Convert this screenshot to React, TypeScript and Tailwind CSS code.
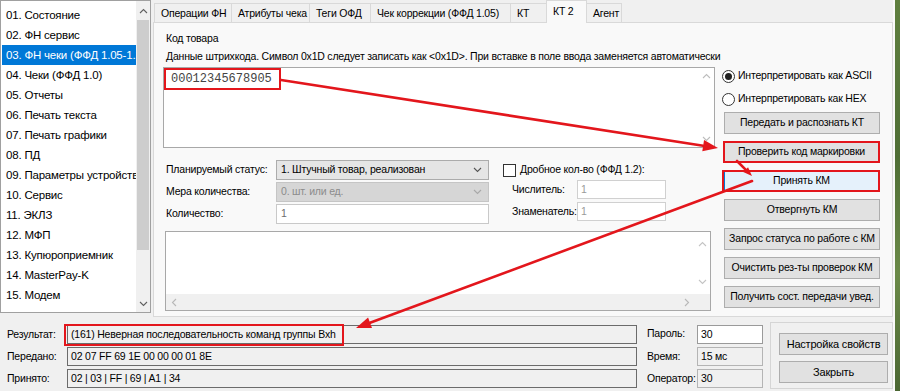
import React from 'react';

const RED = '#e3161c';

const menuItems = [
  '01. Состояние',
  '02. ФН сервис',
  '03. ФН чеки (ФФД 1.05-1.2)',
  '04. Чеки (ФФД 1.0)',
  '05. Отчеты',
  '06. Печать текста',
  '07. Печать графики',
  '08. ПД',
  '09. Параметры устройства',
  '10. Сервис',
  '11. ЭКЛЗ',
  '12. МФП',
  '13. Купюроприемник',
  '14. MasterPay-K',
  '15. Модем',
];

const tabs = [
  { title: 'Операции ФН', w: 'w-[78px]' },
  { title: 'Атрибуты чека', w: 'w-[79px]' },
  { title: 'Теги ОФД', w: 'w-[62px]' },
  { title: 'Чек коррекции (ФФД 1.05)', w: 'w-[141px]' },
  { title: 'КТ', w: 'w-[37px]' },
  { title: 'КТ 2', w: 'w-[41px]', active: true },
  { title: 'Агент', w: 'w-[36px]' },
];

const sideButtons = [
  'Отвергнуть КМ',
  'Запрос статуса по работе с КМ',
  'Очистить рез-ты проверок КМ',
  'Получить сост. передачи увед.',
];

type Dir = 'up' | 'down' | 'left' | 'right';

const Chevron: React.FC<{ dir: Dir; className?: string }> = ({ dir, className }) => {
  const vertical = dir === 'up' || dir === 'down';
  const w = vertical ? 9 : 6;
  const h = vertical ? 6 : 9;
  const pts = {
    up: '1,5 4.5,1.5 8,5',
    down: '1,1 4.5,4.5 8,1',
    left: '5,1 1.5,4.5 5,8',
    right: '1,1 4.5,4.5 1,8',
  }[dir];
  return (
    <svg width={w} height={h} viewBox={`0 0 ${w} ${h}`} className={className}>
      <polyline points={pts} fill="none" stroke="currentColor" strokeWidth="1.1" />
    </svg>
  );
};

const Arrow: React.FC<{ x1: number; y1: number; x2: number; y2: number; head?: number }> = ({
  x1, y1, x2, y2, head = 15,
}) => {
  const a = Math.atan2(y2 - y1, x2 - x1);
  const half = head * 0.38;
  const bx = x2 - head * Math.cos(a);
  const by = y2 - head * Math.sin(a);
  const p1 = `${bx + half * Math.sin(a)},${by - half * Math.cos(a)}`;
  const p2 = `${bx - half * Math.sin(a)},${by + half * Math.cos(a)}`;
  return (
    <g>
      <line x1={x1} y1={y1} x2={bx} y2={by} stroke={RED} strokeWidth="2.6" strokeLinecap="round" />
      <polygon points={`${x2},${y2} ${p1} ${p2}`} fill={RED} />
    </g>
  );
};

const Radio: React.FC<{ checked?: boolean; label: string }> = ({ checked, label }) => (
  <div className="h-[18px] flex items-center pl-[2px] whitespace-nowrap">
    <span className="w-[13px] h-[13px] shrink-0 rounded-full border border-[#333] bg-white flex items-center justify-center">
      {checked && <span className="w-[7px] h-[7px] rounded-full bg-[#222]" />}
    </span>
    <span className="ml-[3px]">{label}</span>
  </div>
);

const WinButton: React.FC<{ children: React.ReactNode; className?: string }> = ({ children, className = '' }) => (
  <div
    className={`h-[22px] bg-[#e1e1e1] border border-[#adadad] flex items-center justify-center whitespace-nowrap ${className}`}
  >
    {children}
  </div>
);

const ListBox = () => (
  <div className="w-[151px] h-[313px] bg-white border border-[#a0a0a0] flex text-[11.5px]">
    <div className="flex-1 pt-[4px] pl-[1px] overflow-hidden">
      {menuItems.map((m, i) => (
        <div
          key={m}
          className={`h-[20px] leading-[20px] pl-[4px] whitespace-nowrap overflow-hidden ${
            i === 2 ? 'bg-[#0078d7] text-white' : ''
          }`}
        >
          {m}
        </div>
      ))}
    </div>
    <div className="w-[14px] bg-[#f0f0f0] flex flex-col items-center">
      <div className="h-[19px] flex items-center text-[#606060]">
        <Chevron dir="up" />
      </div>
      <div className="w-[12px] h-[230px] bg-[#cdcdcd]" />
      <div className="flex-1" />
      <div className="h-[17px] flex items-center text-[#606060]">
        <Chevron dir="down" />
      </div>
    </div>
  </div>
);

const TabStrip = () => (
  <div className="h-[22px] flex items-end pl-[2px]">
    {tabs.map((t) =>
      t.active ? (
        <div
          key={t.title}
          className={`${t.w} h-[23px] -ml-px relative z-10 bg-[#f9f9f9] border border-b-0 border-[#d9d9d9] pl-[6px] pt-[3px] leading-[14px] whitespace-nowrap -mb-px`}
        >
          {t.title}
        </div>
      ) : (
        <div
          key={t.title}
          className={`${t.w} h-[19px] -ml-px bg-[#f0f0f0] border border-b-0 border-[#d9d9d9] pl-[6px] leading-[18px] whitespace-nowrap`}
        >
          {t.title}
        </div>
      )
    )}
  </div>
);

const FormArea = () => (
  <div className="flex mt-[12px] whitespace-nowrap">
    <div className="w-[326px] flex flex-col gap-[2px]">
      <div className="h-[20px] flex items-center">
        <div className="w-[113px] pl-[3px]">Планируемый статус:</div>
        <div className="w-[213px] h-[20px] bg-[#e5e5e5] border border-[#acacac] flex items-center pl-[4px] pr-[6px]">
          <span className="flex-1">1. Штучный товар, реализован</span>
          <Chevron dir="down" className="text-[#555]" />
        </div>
      </div>
      <div className="h-[20px] flex items-center">
        <div className="w-[113px] pl-[3px]">Мера количества:</div>
        <div className="w-[213px] h-[20px] bg-[#d6d6d6] border border-[#c5c5c5] flex items-center pl-[4px] pr-[6px] text-[#8c8c8c]">
          <span className="flex-1">0. шт. или ед.</span>
          <Chevron dir="down" className="text-[#a8a8a8]" />
        </div>
      </div>
      <div className="h-[20px] flex items-center">
        <div className="w-[113px] pl-[3px]">Количество:</div>
        <div className="w-[213px] h-[20px] bg-white border border-[#c9c9c9] flex items-center pl-[4px] text-[#6d6d6d]">
          1
        </div>
      </div>
    </div>
    <div className="ml-[14px] flex flex-col">
      <div className="h-[20px] flex items-center">
        <span className="w-[13px] h-[13px] border border-[#333] bg-white" />
        <span className="ml-[4px]">Дробное кол-во (ФФД 1.2):</span>
      </div>
      <div className="h-[19px] flex items-center">
        <div className="w-[74px] pl-[9px]">Числитель:</div>
        <div className="w-[89px] h-[19px] bg-white border border-[#d0d0d0] pl-[3px] leading-[17px] text-[#9a9a9a]">1</div>
      </div>
      <div className="h-[19px] mt-[3px] flex items-center">
        <div className="w-[74px] pl-[9px]">Знаменатель:</div>
        <div className="w-[89px] h-[19px] bg-white border border-[#d0d0d0] pl-[3px] leading-[17px] text-[#9a9a9a]">1</div>
      </div>
    </div>
  </div>
);

const TabPanel = () => (
  <div className="flex-1 border border-[#d9d9d9] bg-[#f9f9f9] pl-[9px] pt-[6px] flex flex-col">
    <div className="pl-[3px] leading-[18px]">Код товара</div>
    <div className="pl-[3px] leading-[18px] whitespace-nowrap">
      Данные штрихкода. Символ 0x1D следует записать как &lt;0x1D&gt;. При вставке в поле ввода заменяется автоматически
    </div>
    <div className="flex mt-[2px]">
      <div className="w-[552px] flex flex-col">
        <div className="h-[81px] bg-white border border-[#a8a8a8] flex">
          <div className="flex-1">
            <span className="inline-block h-[22px] w-[117px] border-2 border-[#e3161c] pl-[5px] leading-[18px] font-['Liberation_Mono',monospace] text-[12px] tracking-normal text-[#444]">
              00012345678905
            </span>
          </div>
          <div className="w-[15px] flex flex-col items-center justify-between py-[5px] text-[#bdbdbd]">
            <Chevron dir="up" />
            <Chevron dir="down" />
          </div>
        </div>
        <FormArea />
        <div className="mt-[7px] ml-[2px] w-[546px] h-[80px] border border-[#a8a8a8] flex flex-col">
          <div className="flex-1 flex bg-white">
            <div className="flex-1" />
            <div className="w-[15px] flex flex-col items-center justify-between py-[9px] text-[#c4c4c4]">
              <Chevron dir="up" />
              <Chevron dir="down" />
            </div>
          </div>
          <div className="h-[16px] bg-[#f0f0f0] flex items-center text-[#b8b8b8]">
            <div className="flex-1 flex items-center justify-between px-[5px]">
              <Chevron dir="left" />
              <Chevron dir="right" />
            </div>
            <div className="w-[15px]" />
          </div>
        </div>
      </div>
      <div className="ml-[5px] w-[161px] flex flex-col">
        <Radio checked label="Интерпретировать как ASCII" />
        <div className="mt-[5px]">
          <Radio label="Интерпретировать как HEX" />
        </div>
        <WinButton className="mt-[4px] ml-[4px] w-[156px]">Передать и распознать КТ</WinButton>
        <WinButton className="mt-[7px] ml-[3px] w-[157px] !border-2 !border-[#e3161c]">Проверить код маркировки</WinButton>
        <div className="mt-[7px] ml-[2px] w-[158px] h-[22px] border-2 border-[#e3161c] bg-[#e5f1fb] flex">
          <div className="w-[1px] bg-[#0078d7]" />
          <div className="flex-1 flex items-center justify-center">Принять КМ</div>
        </div>
        {sideButtons.map((b) => (
          <WinButton key={b} className="mt-[7px] ml-[4px] w-[156px]">
            {b}
          </WinButton>
        ))}
      </div>
    </div>
  </div>
);

const BottomBar = () => (
  <div className="flex-1 flex pl-[7px] pt-[7px] whitespace-nowrap">
    <div className="w-[60px] flex flex-col gap-[3px]">
      <div className="h-[19px] leading-[19px]">Результат:</div>
      <div className="h-[19px] leading-[19px]">Передано:</div>
      <div className="h-[19px] leading-[19px]">Принято:</div>
    </div>
    <div className="w-[570px] flex flex-col gap-[3px]">
      <div className="h-[19px] relative border border-[#6b6b6b] pl-[3px] leading-[17px]">
        (161) Неверная последовательность команд группы Bxh
        <div className="absolute -left-[4px] -top-[2px] w-[280px] h-[22px] border-2 border-[#e3161c]" />
      </div>
      <div className="h-[19px] border border-[#6b6b6b] pl-[3px] leading-[17px]">02 07 FF 69 1E 00 00 00 01 8E</div>
      <div className="h-[19px] border border-[#6b6b6b] pl-[3px] leading-[17px]">02 | 03 | FF | 69 | A1 | 34</div>
    </div>
    <div className="ml-[10px] w-[50px] flex flex-col gap-[3px]">
      <div className="h-[19px] leading-[17px]">Пароль:</div>
      <div className="h-[19px] leading-[19px]">Время:</div>
      <div className="h-[19px] leading-[19px]">Оператор:</div>
    </div>
    <div className="w-[66px] flex flex-col gap-[3px]">
      <div className="h-[19px] bg-white border border-[#9a9a9a] pl-[3px] leading-[17px]">30</div>
      <div className="h-[19px] bg-[#f0f0f0] border border-[#b4b4b4] pl-[3px] leading-[17px]">15 мс</div>
      <div className="h-[19px] bg-[#f0f0f0] border border-[#b4b4b4] pl-[3px] leading-[17px]">30</div>
    </div>
    <div className="ml-[7px] -mt-[3px] w-[123px] h-[67px] border border-[#d5d5d5] pl-[8px] pt-[10px] flex flex-col gap-[6px] text-[11px]">
      <WinButton className="w-[109px]">Настройка свойств</WinButton>
      <WinButton className="w-[109px]">Закрыть</WinButton>
    </div>
  </div>
);

export default function App() {
  return (
    <div className="w-[900px] h-[391px] bg-[#f0f0f0] flex overflow-hidden relative font-['Liberation_Sans',Arial,sans-serif] text-[10.5px] tracking-[-0.2px] text-black">
      <div className="w-[893px] flex flex-col">
        <div className="h-[318px] flex">
          <ListBox />
          <div className="ml-[2px] w-[740px] h-[317px] flex flex-col">
            <TabStrip />
            <TabPanel />
          </div>
        </div>
        <BottomBar />
      </div>
      <div className="w-[2px] bg-[#fafafa]" />
      <div className="flex-1 bg-[linear-gradient(180deg,#5f7f3f,#4f6e35_40%,#6b8a48_70%,#4a6632)]" />
      <svg className="absolute inset-0 pointer-events-none" width="900" height="391" viewBox="0 0 900 391">
        <Arrow x1={281} y1={80} x2={718} y2={148} />
        <Arrow x1={737} y1={161} x2={752} y2={176} head={9} />
        <Arrow x1={752} y1={181} x2={356} y2={328} />
      </svg>
    </div>
  );
}
